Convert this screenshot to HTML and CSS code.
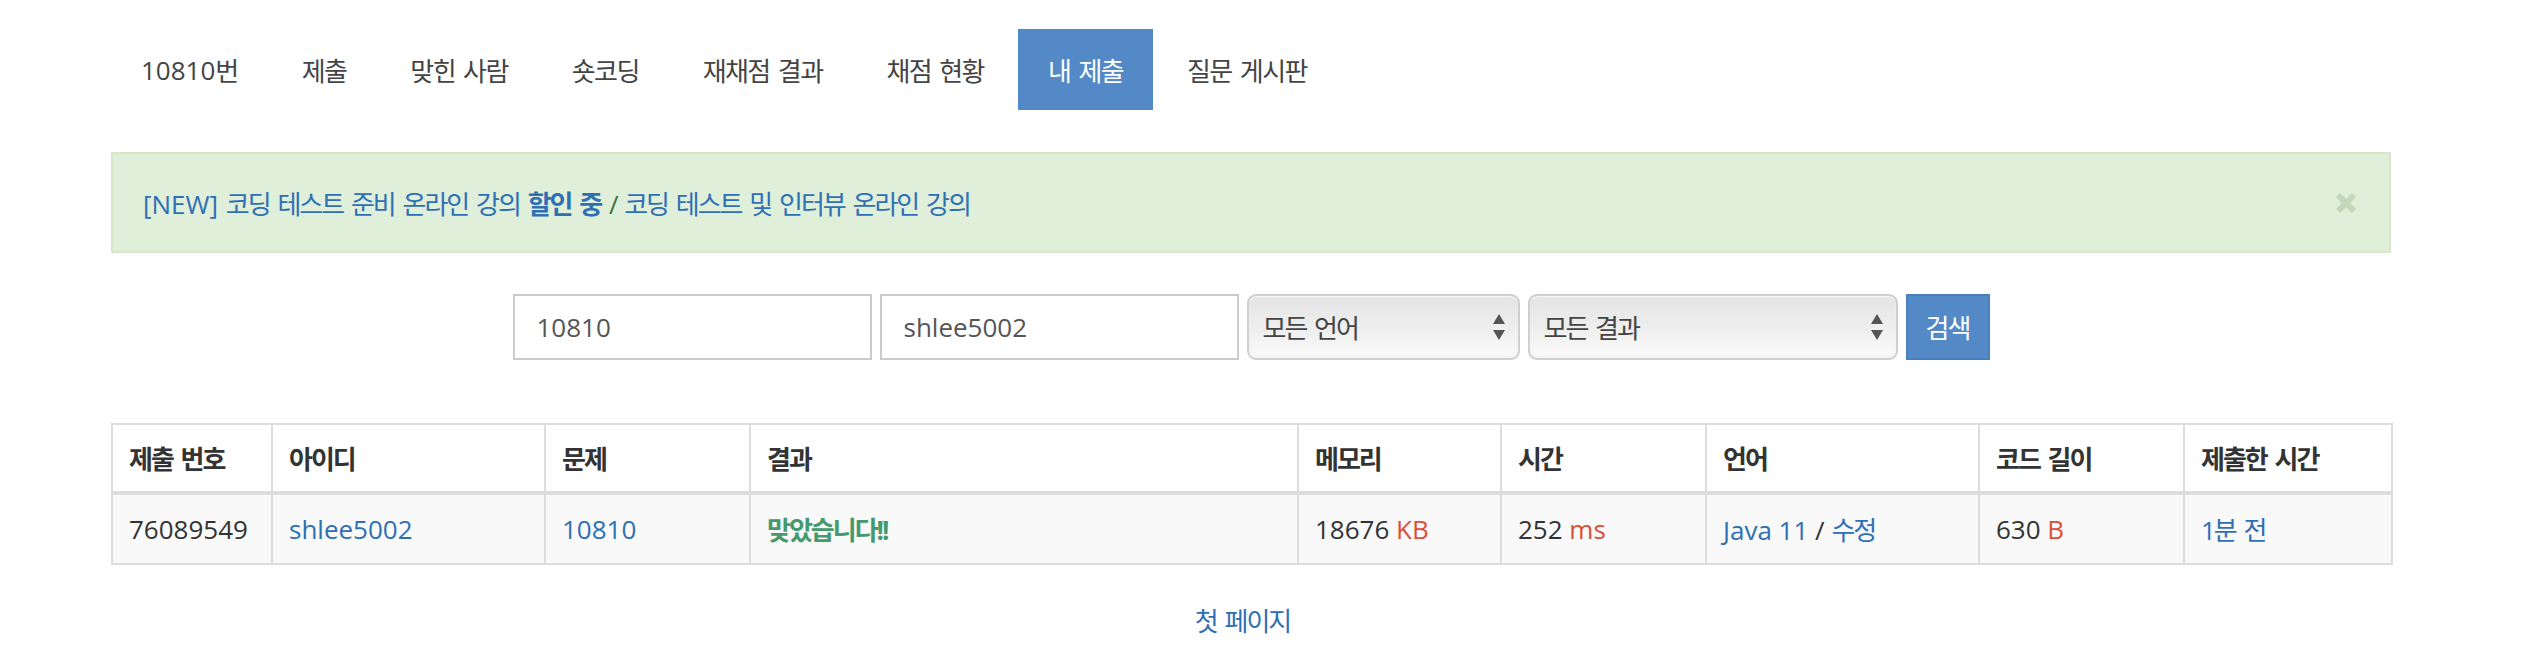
FILE: index.html
```html
<!DOCTYPE html>
<html lang="ko">
<head>
<meta charset="utf-8">
<title>내 제출</title>
<link rel="stylesheet" href="styles.css">
</head>
<body>
<div class="container">
  <ul class="nav-pills">
    <li><a href="#"><span class="en">10810</span>번</a></li>
    <li><a href="#">제출</a></li>
    <li><a href="#">맞힌 사람</a></li>
    <li><a href="#">숏코딩</a></li>
    <li><a href="#">재채점 결과</a></li>
    <li><a href="#">채점 현황</a></li>
    <li class="active"><a href="#">내 제출</a></li>
    <li><a href="#">질문 게시판</a></li>
  </ul>

  <div class="alert">
    <div class="alert-text"><a href="#"><span class="en">[NEW]</span> 코딩 테스트 준비 온라인 강의 <b>할인 중</b></a> / <a href="#">코딩 테스트 및 인터뷰 온라인 강의</a></div>
    <button class="close" type="button" aria-label="닫기">
      <svg width="22" height="22" viewBox="0 0 22 22"><path d="M3 3 L19 19 M19 3 L3 19" stroke="currentColor" stroke-width="6"/></svg>
    </button>
  </div>

  <form class="search">
    <div class="input input-problem">10810</div>
    <div class="input input-user">shlee5002</div>
    <div class="select select-lang"><span>모든 언어</span>
      <svg width="14" height="30" viewBox="0 0 14 30"><path d="M7 2 L13 12 L1 12 Z M1 18 L13 18 L7 28 Z" fill="#555"/></svg>
    </div>
    <div class="select select-result"><span>모든 결과</span>
      <svg width="14" height="30" viewBox="0 0 14 30"><path d="M7 2 L13 12 L1 12 Z M1 18 L13 18 L7 28 Z" fill="#555"/></svg>
    </div>
    <button class="btn" type="button">검색</button>
  </form>

  <table class="status">
    <thead>
      <tr>
        <th class="c-id">제출 번호</th>
        <th class="c-user">아이디</th>
        <th class="c-prob">문제</th>
        <th class="c-res">결과</th>
        <th class="c-mem">메모리</th>
        <th class="c-time">시간</th>
        <th class="c-lang">언어</th>
        <th class="c-len">코드 길이</th>
        <th class="c-date">제출한 시간</th>
      </tr>
    </thead>
    <tbody>
      <tr>
        <td>76089549</td>
        <td><a href="#">shlee5002</a></td>
        <td><a href="#">10810</a></td>
        <td><span class="result-ac">맞았습니다!!</span></td>
        <td>18676 <span class="red">KB</span></td>
        <td>252 <span class="red">ms</span></td>
        <td><a href="#">Java 11</a> / <a href="#" class="ko">수정</a></td>
        <td>630 <span class="red">B</span></td>
        <td><a href="#" class="ko">1분 전</a></td>
      </tr>
    </tbody>
  </table>

  <div class="pager"><a href="#">첫 페이지</a></div>
</div>
</body>
</html>
```

FILE: styles.css
```css
html, body {
  margin: 0;
  padding: 0;
  background: #fff;
}
body {
  font-family: "Open Sans", "Noto Sans CJK KR", sans-serif;
  font-size: 26px;
  color: #333;
}
a {
  color: #2f6fb4;
  text-decoration: none;
}
.ko,
.nav-pills a,
.alert-text,
.select span,
.btn,
.status th,
.result-ac,
.pager a {
  letter-spacing: -2px;
  word-spacing: 3px;
}
.nav-pills a {
  letter-spacing: -1.6px;
}
.en {
  letter-spacing: 0;
  word-spacing: 0;
}
.container {
  width: 2280px;
  margin-left: 111px;
  padding-top: 29px;
}

/* nav */
.nav-pills {
  list-style: none;
  margin: 0;
  padding: 0;
  display: flex;
  gap: 4px;
}
.nav-pills a {
  display: flex;
  align-items: center;
  height: 81px;
  padding: 0 30px;
  color: #444;
}
.nav-pills .active a {
  background: #5389c6;
  color: #fff;
}

/* alert */
.alert {
  margin-top: 42px;
  height: 101px;
  box-sizing: border-box;
  background: #e0efd9;
  border: 2px solid #d6e8c8;
  display: flex;
  align-items: center;
  justify-content: space-between;
  padding: 0 32px 0 30px;
  color: #3c763d;
}
.alert-text a {
  color: #2f6fb4;
}
.close {
  border: 0;
  background: none;
  padding: 0;
  color: #c3d7b9;
  display: flex;
}

/* search form */
.search {
  margin-top: 41px;
  display: flex;
  justify-content: center;
  gap: 8px;
  height: 66px;
}
.input {
  box-sizing: border-box;
  width: 359px;
  border: 2px solid #ccc;
  padding: 0 22px;
  display: flex;
  align-items: center;
  color: #555;
}
.select {
  box-sizing: border-box;
  border: 2px solid #cfcfcf;
  border-radius: 9px;
  background: linear-gradient(#e4e4e4, #f0f0f0 60%, #fbfbfb);
  box-shadow: inset 0 1px 2px rgba(255,255,255,.8), inset 0 -2px 3px rgba(0,0,0,.04);
  display: flex;
  align-items: center;
  justify-content: space-between;
  padding: 0 12px 0 14px;
  color: #444;
}
.select-lang { width: 273px; }
.select-result { width: 370px; }
.btn {
  width: 84px;
  border: 2px solid #4b80bd;
  background: #5389c6;
  color: #fff;
  font-family: inherit;
  font-size: 26px;
  padding: 0;
}

/* table */
.status {
  margin-top: 63px;
  width: 2280px;
  table-layout: fixed;
  border-collapse: collapse;
  border: 2px solid #ddd;
}
.status th, .status td {
  box-sizing: border-box;
  border: 2px solid #ddd;
  padding: 0 16px;
  text-align: left;
  white-space: nowrap;
}
.status th {
  height: 69px;
  font-weight: bold;
  border-bottom-width: 4px;
}
.status td {
  height: 71px;
  background: #f9f9f9;
}
.c-id { width: 160px; }
.c-user { width: 273px; }
.c-prob { width: 205px; }
.c-res { width: 548px; }
.c-mem { width: 203px; }
.c-time { width: 205px; }
.c-lang { width: 273px; }
.c-len { width: 205px; }
.c-date { width: 208px; }
.result-ac {
  color: #449a6e;
  font-weight: bold;
}
.red {
  color: #d9503a;
}

/* pager */
.pager {
  margin-top: 36px;
  text-align: center;
  padding-right: 17px;
}
```
